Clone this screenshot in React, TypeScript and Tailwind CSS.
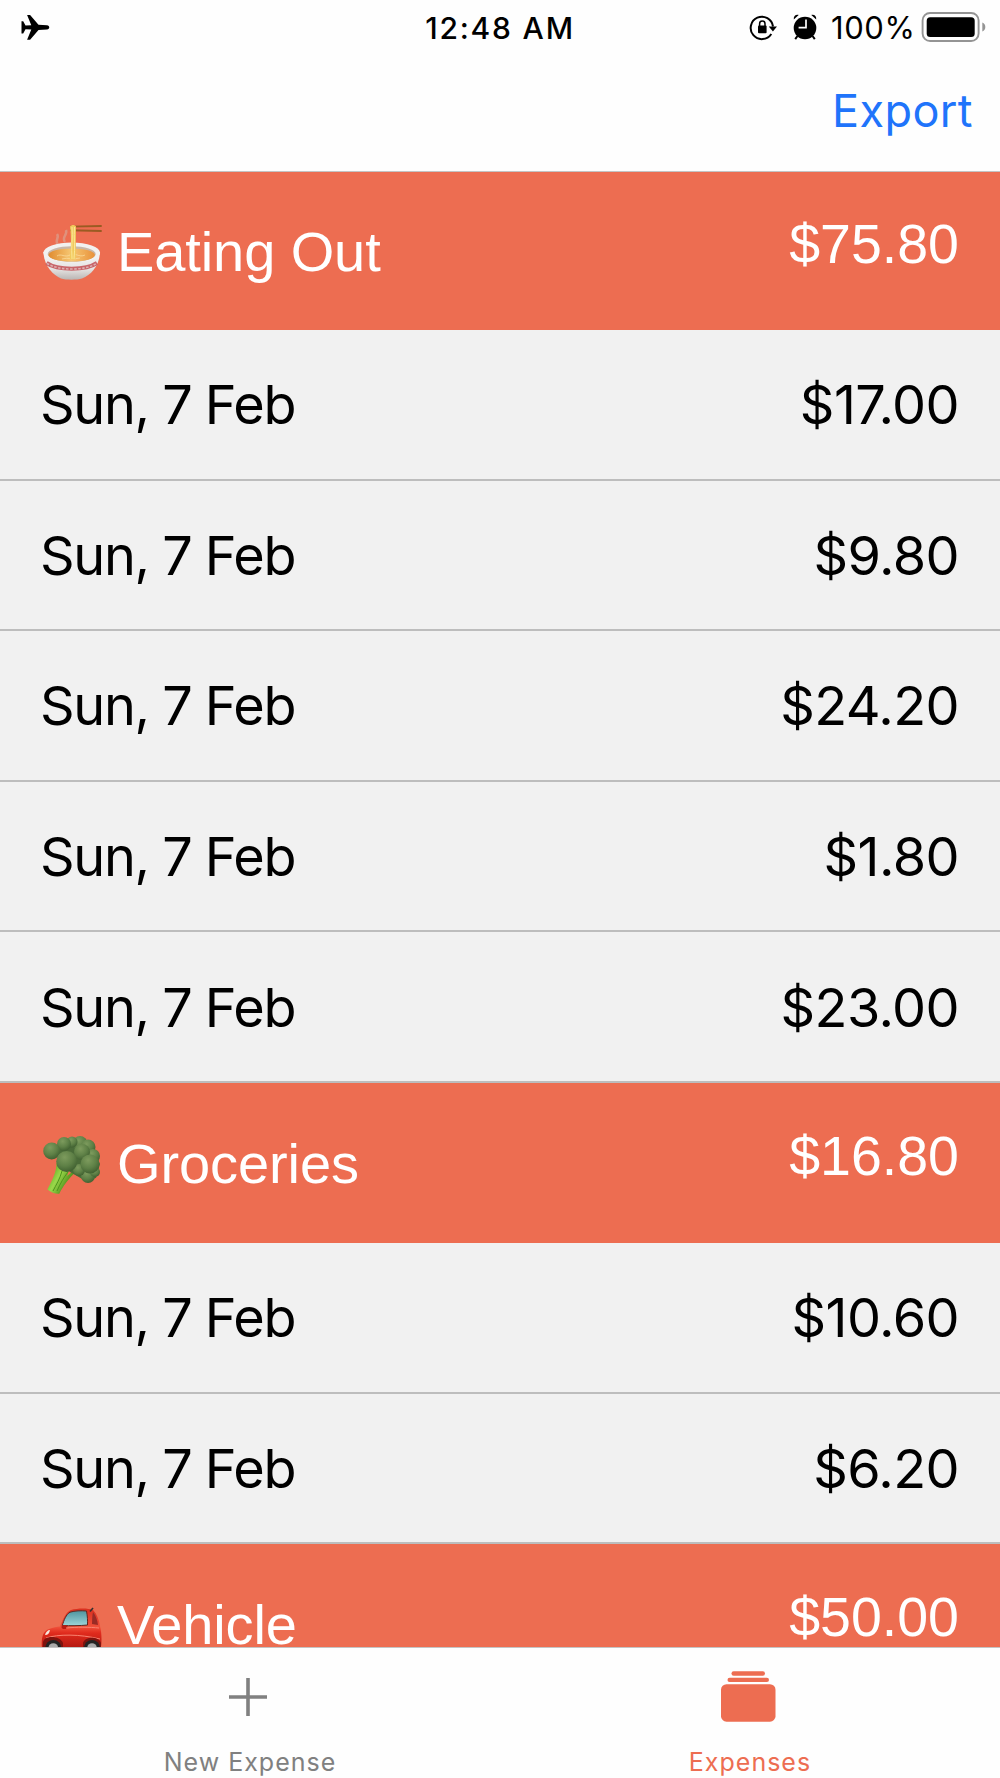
import React from 'react';
import clsx from 'clsx';

interface Category {
  name: string;
  total: string;
  icon: React.ReactNode;
  expenses: { date: string; amount: string }[];
}

const AirplaneIcon = () => (
  <svg width="30" height="28" viewBox="0 0 30 28" fill="#000">
    <path d="M.5 7.2h1.700L4.500 11.600l5.800-.3L6.100 1h3L17.500 10.800l8.500.5c3 .3 3 3.900 0 4.200l-8.500.5L9.100 25.800h-3l4.200-10.300L4.500 15.200l-2.300 4.400H.5z" />
  </svg>
);

const RotationLockIcon = () => (
  <svg width="28" height="28" viewBox="0 0 28 28" fill="none">
    <path d="M22.300 20A11.200 11.200 0 1 1 24 12.500" stroke="#000" strokeWidth="2" />
    <path d="M19.800 12.500h8.200l-4.100 5z" fill="#000" />
    <rect x="9" y="11.600" width="8.600" height="7.600" rx="1" fill="#000" />
    <path d="M10.600 12V9.800a2.700 2.700 0 0 1 5.400 0V12" stroke="#000" strokeWidth="1.500" />
  </svg>
);

const AlarmIcon = () => (
  <svg width="24" height="28" viewBox="0 0 24 28">
    <circle cx="12" cy="14" r="11.300" fill="#000" />
    <path d="M.8 5.400C.4 2.400 2.600.3 5.700 1zM23.200 5.400c.4-3-1.800-5.100-4.900-4.400z" fill="#000" />
    <path d="M4.500 22l-2.300 3.200M19.500 22l2.300 3.200" stroke="#000" strokeWidth="2" />
    <path d="M13 5.500v8.200H5.600" stroke="#fff" strokeWidth="1.700" fill="none" />
  </svg>
);

const BatteryIcon = () => (
  <svg width="66" height="32" viewBox="0 0 66 32">
    <rect x="1.600" y="1" width="56" height="28" rx="7.500" fill="none" stroke="#949494" strokeWidth="1.900" />
    <rect x="5.700" y="5.300" width="48" height="19.600" rx="3.500" fill="#000" />
    <path d="M61.300 10.500c4 1.400 4 7.600 0 9z" fill="#949494" />
  </svg>
);

const NoodlesIcon = () => (
  <svg width="60" height="60" viewBox="0 0 60 60" fill="none">
    <defs>
      <linearGradient id="bowl" x1="0" y1="30" x2="0" y2="58" gradientUnits="userSpaceOnUse">
        <stop stopColor="#f7f7f7" />
        <stop offset="0.6" stopColor="#e6e4e3" />
        <stop offset="1" stopColor="#b9b4b2" />
      </linearGradient>
      <linearGradient id="soup" x1="6" y1="0" x2="53" y2="0" gradientUnits="userSpaceOnUse">
        <stop stopColor="#e08a2e" />
        <stop offset="0.5" stopColor="#f7c873" />
        <stop offset="1" stopColor="#e8913a" />
      </linearGradient>
    </defs>
    <path d="M16 23c-4-5 2-7-1-11M23 20c-4-5 3-7 1-12" stroke="#d3b5a8" strokeWidth="2.500" opacity="0.5" />
    <path d="M1.400 30C2 44 11 53 19 56.500c5 1.600 16 1.600 21 0C49 53 57.500 44 58 30z" fill="url(#bowl)" />
    <ellipse cx="29.700" cy="30.600" rx="28.300" ry="10" fill="#f2f1f0" />
    <ellipse cx="29.700" cy="32" rx="24" ry="7.800" fill="#c9b7a8" />
    <ellipse cx="29.700" cy="33" rx="23.200" ry="6.600" fill="url(#soup)" />
    <path d="M15 34c4-3 8 2 13-1s9 3 15 0M20 37c6-2 11 1 18-1" stroke="#fbe0a2" strokeWidth="1" opacity="0.7" />
    <path d="M4.500 41c11 7.500 39.500 7.500 50.500 0" stroke="#c8656a" strokeWidth="4" />
    <path d="M5 41.400c11 7.500 38.500 7.500 49.500 0" stroke="#ddb0b1" strokeWidth="1.600" strokeDasharray="2.500 1.500" />
    <path d="M28 4.600L59.700 4M28 8.200l31.700.8" stroke="#9a5b22" strokeWidth="1.900" />
    <path d="M28 4.500c1.500-2 5-2 6 0l-.3 32c-1.500 1.500-4.500 1.500-6 0 1.500-11 1.800-21 .3-32z" fill="#f1c95c" />
    <path d="M30 5c1 10-1 20 0 32M32.500 5c-1 10 1 20-.5 32" stroke="#fbe79a" strokeWidth="1" />
  </svg>
);

const BroccoliIcon = () => (
  <svg width="60" height="60" viewBox="0 0 60 60">
    <defs>
      <radialGradient id="floret" cx="0.4" cy="0.3" r="0.7">
        <stop stopColor="#7d9b5d" />
        <stop offset="0.6" stopColor="#5e8046" />
        <stop offset="1" stopColor="#426232" />
      </radialGradient>
      <linearGradient id="stalk" x1="6" y1="40" x2="24" y2="50" gradientUnits="userSpaceOnUse">
        <stop stopColor="#5fa51f" />
        <stop offset="0.5" stopColor="#9ad84a" />
        <stop offset="1" stopColor="#5b9a22" />
      </linearGradient>
    </defs>
    <path d="M14.500 29c0 9-4 17-9.200 26.500 4 3 8 4.500 12 4.200C21 52 27 44 34 38l8-4-10-8z" fill="url(#stalk)" />
    <path d="M20 37c-2 8-6 14-9 20M26 38c-4 5-8 12-11 19" stroke="#4d941b" strokeWidth="1" fill="none" />
    <path d="M27 37l-2 5 5-4z" fill="#ED6D51" />
    <path d="M12 14L22 5l18-1 12 12 6 14-4 14-12 2-14-8z" fill="#4a6b38" />
    <g fill="url(#floret)">
      <circle cx="38" cy="9.500" r="7.500" />
      <circle cx="30" cy="8" r="5.500" />
      <circle cx="22" cy="10" r="7" />
      <circle cx="46" cy="13" r="7.500" />
      <circle cx="51" cy="22" r="7" />
      <circle cx="9.700" cy="17" r="8.500" />
      <circle cx="40" cy="18" r="8" />
      <circle cx="46" cy="42" r="7" />
      <circle cx="53" cy="38" r="5" />
      <circle cx="37" cy="36" r="6" />
      <circle cx="48" cy="30" r="9.500" />
      <circle cx="24.700" cy="27.500" r="10.500" />
    </g>
  </svg>
);

const CarIcon = () => (
  <svg width="60" height="60" viewBox="0 0 60 60" className="overflow-visible">
    <defs>
      <linearGradient id="paint" x1="0" y1="14" x2="0" y2="54" gradientUnits="userSpaceOnUse">
        <stop stopColor="#d9301f" />
        <stop offset="0.45" stopColor="#f0503a" />
        <stop offset="0.6" stopColor="#e02b1d" />
        <stop offset="1" stopColor="#b01710" />
      </linearGradient>
      <linearGradient id="glass" x1="0" y1="16" x2="0" y2="31" gradientUnits="userSpaceOnUse">
        <stop stopColor="#4f96a0" />
        <stop offset="1" stopColor="#9fd6da" />
      </linearGradient>
    </defs>
    <path d="M0 53c-1-9 .5-17 7-19 4-1.500 8-2.200 11-2.500C21 24 24 17 29 15c7-2 17-2 22 0 4 4 6 10 7 16 1.500 6 2 14 1 21l-3 2z" fill="url(#paint)" />
    <path d="M20.300 30.500C22 25 24 19.500 28 17.200c5-1.500 11-1.700 16.500-1.200 1 5 1.200 10 1 14-8 .8-17 .8-25.200.5z" fill="url(#glass)" stroke="#5d2721" strokeWidth="1" />
    <path d="M51 17c3 4 4.500 8 5 13l-6-1c.3-4 0-8 1-12z" fill="#9a2b25" />
    <path d="M48 16.500l3-3.500" stroke="#33302f" strokeWidth="1.600" />
    <ellipse cx="22.500" cy="32" rx="3" ry="2" fill="#b81b13" />
    <path d="M24 33c10-1 24-1 33 0M4 43c12-4 34-4 54 1" stroke="#f98370" strokeWidth="1" fill="none" />
    <path d="M3 40c.5-3 3-5 5-5-.5 3-2 5-5 5z" fill="#f5e9df" />
    <path d="M1 48c0-8 17-8 20 0v6H1zM41 48c2-7 16-7 18 0v6H41z" fill="#7e130e" />
    <circle cx="11.300" cy="53" r="8" fill="#242424" />
    <circle cx="11.300" cy="53" r="4.800" fill="#aaa" />
    <circle cx="50" cy="53" r="8" fill="#242424" />
    <circle cx="50" cy="53" r="4.800" fill="#aaa" />
  </svg>
);

const PlusIcon = () => (
  <svg width="38" height="38" viewBox="0 0 38 38" stroke="#808080" strokeWidth="3.600">
    <path d="M19 0v38M0 19h38" />
  </svg>
);

const ExpensesIcon = () => (
  <svg width="56" height="52" viewBox="0 0 56 52" fill="#ED6D51">
    <rect x="11.500" y="0.300" width="33.500" height="4.400" rx="2.200" />
    <rect x="7.500" y="6.800" width="41.500" height="4.200" rx="2.100" />
    <rect x="1" y="13.200" width="54.500" height="37.500" rx="5.500" />
  </svg>
);

const categories: Category[] = [
  {
    name: 'Eating Out',
    total: '$75.80',
    icon: <NoodlesIcon />,
    expenses: [
      { date: 'Sun, 7 Feb', amount: '$17.00' },
      { date: 'Sun, 7 Feb', amount: '$9.80' },
      { date: 'Sun, 7 Feb', amount: '$24.20' },
      { date: 'Sun, 7 Feb', amount: '$1.80' },
      { date: 'Sun, 7 Feb', amount: '$23.00' },
    ],
  },
  {
    name: 'Groceries',
    total: '$16.80',
    icon: <BroccoliIcon />,
    expenses: [
      { date: 'Sun, 7 Feb', amount: '$10.60' },
      { date: 'Sun, 7 Feb', amount: '$6.20' },
    ],
  },
  {
    name: 'Vehicle',
    total: '$50.00',
    icon: <CarIcon />,
    expenses: [],
  },
];

const StatusBar = () => (
  <div className="grid h-[55px] shrink-0 grid-cols-[1fr_auto_1fr] items-center">
    <div className="pl-[21px]">
      <AirplaneIcon />
    </div>
    <span className="text-[30px] font-medium leading-none tracking-[1.8px]">12:48 AM</span>
    <div className="flex items-center justify-end pr-[13px]">
      <RotationLockIcon />
      <div className="ml-4">
        <AlarmIcon />
      </div>
      <span className="ml-3.5 w-[90px] text-[31px] leading-none tracking-[0.6px]">100%</span>
      <BatteryIcon />
    </div>
  </div>
);

const CategorySection: React.FC<{ category: Category; first: boolean }> = ({ category, first }) => (
  <section>
    <div
      className={clsx(
        "flex items-center justify-between bg-[#ED6D51] pl-[42px] pr-[41px] pt-0.5 font-['Liberation_Sans',sans-serif] text-white",
        first ? 'h-[158px]' : 'h-[160px]'
      )}
    >
      <div className="flex items-center gap-[15px]">
        {category.icon}
        <h2 className="text-[56px] leading-none tracking-[-0.1px]">{category.name}</h2>
      </div>
      <span className="pb-[14px] text-[55.5px] leading-none">{category.total}</span>
    </div>
    {category.expenses.map((expense, index) => (
      <div
        key={index}
        className="flex h-[150.6px] items-center justify-between border-b-2 border-[#bdbdbd] bg-[#f1f1f1] pl-[40px] pr-[41px] pt-0.5 text-[54px] leading-none"
      >
        <span className="tracking-[-1.3px] [word-spacing:-0.5px]">{expense.date}</span>
        <span className="tracking-[-0.6px]">{expense.amount}</span>
      </div>
    ))}
  </section>
);

export default function App() {
  return (
    <div className="flex h-[1778px] w-[1000px] flex-col overflow-hidden bg-[#fefefe] font-['Inter',sans-serif] text-black">
      <StatusBar />
      <header className="flex h-[117px] shrink-0 items-center justify-end border-b border-[#c4c4c4] pb-[5px] pr-[27px]">
        <button className="text-[45px] leading-none tracking-[0.4px] text-[#1f74fb]">Export</button>
      </header>

      <main className="min-h-0 flex-1 overflow-hidden">
        {categories.map((category, index) => (
          <CategorySection key={category.name} category={category} first={index === 0} />
        ))}
      </main>

      <nav className="grid h-[131px] shrink-0 grid-cols-2 border-t border-[#c4c4c4] text-[25px] leading-none tracking-[1px]">
        <button className="flex flex-col items-center text-[#808080]">
          <div className="flex h-[102px] items-center pb-[5px] pr-[4px]">
            <PlusIcon />
          </div>
          New Expense
        </button>
        <button className="flex flex-col items-center text-[#ED6D51]">
          <div className="flex h-[102px] items-center pb-[5px] pr-[4px]">
            <ExpensesIcon />
          </div>
          Expenses
        </button>
      </nav>
    </div>
  );
}
